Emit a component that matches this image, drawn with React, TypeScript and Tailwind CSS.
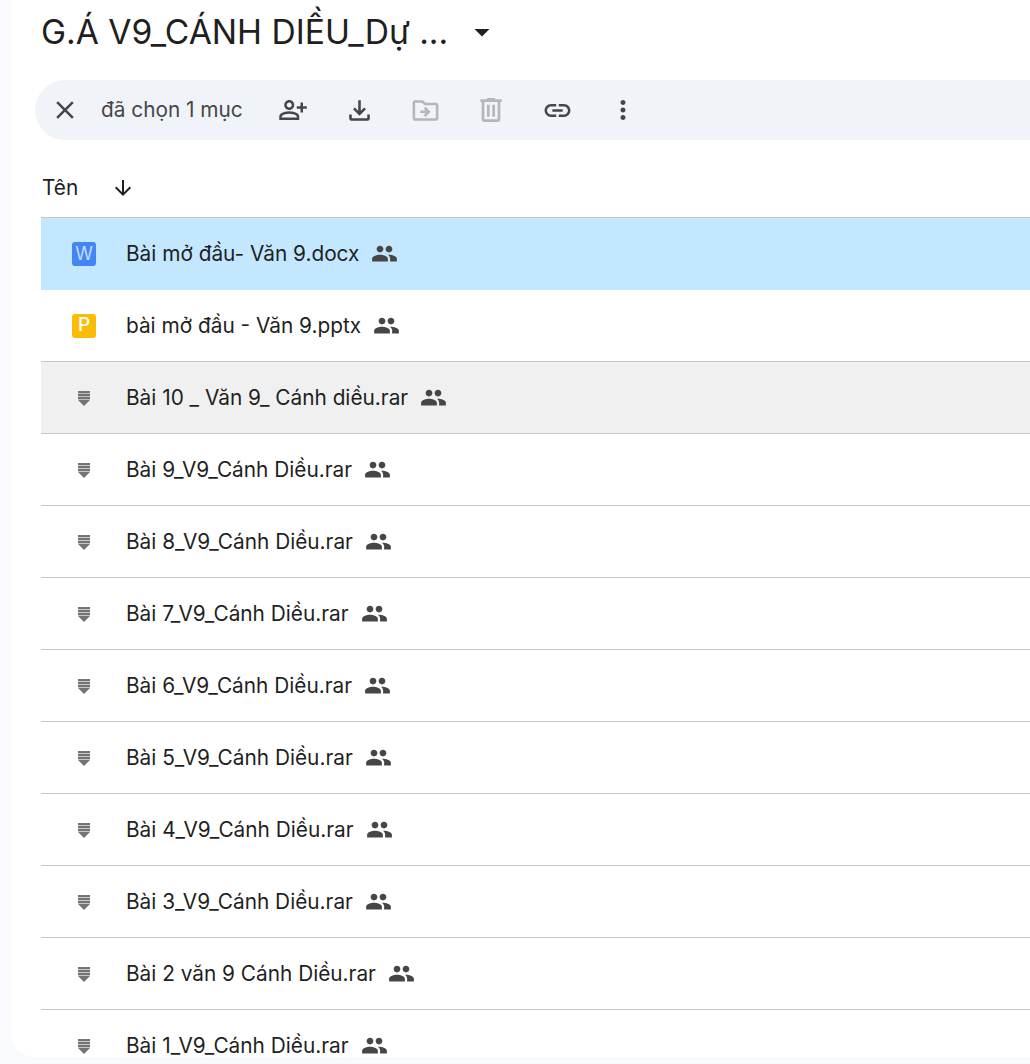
import {
  MdArrowDownward,
  MdArrowDropDown,
  MdClose,
  MdLink,
  MdMoreVert,
  MdOutlineDriveFileMove,
  MdOutlineFileDownload,
  MdOutlinePersonAddAlt,
  MdPeople,
} from 'react-icons/md';

type FileKind = 'word' | 'ppt' | 'rar';

const files: { name: string; kind: FileKind; state?: 'selected' | 'hover' }[] = [
  { name: 'Bài mở đầu- Văn 9.docx', kind: 'word', state: 'selected' },
  { name: 'bài mở đầu - Văn 9.pptx', kind: 'ppt' },
  { name: 'Bài 10 _ Văn 9_ Cánh diều.rar', kind: 'rar', state: 'hover' },
  { name: 'Bài 9_V9_Cánh Diều.rar', kind: 'rar' },
  { name: 'Bài 8_V9_Cánh Diều.rar', kind: 'rar' },
  { name: 'Bài 7_V9_Cánh Diều.rar', kind: 'rar' },
  { name: 'Bài 6_V9_Cánh Diều.rar', kind: 'rar' },
  { name: 'Bài 5_V9_Cánh Diều.rar', kind: 'rar' },
  { name: 'Bài 4_V9_Cánh Diều.rar', kind: 'rar' },
  { name: 'Bài 3_V9_Cánh Diều.rar', kind: 'rar' },
  { name: 'Bài 2 văn 9 Cánh Diều.rar', kind: 'rar' },
  { name: 'Bài 1_V9_Cánh Diều.rar', kind: 'rar' },
];

const FileIcon = ({ kind }: { kind: FileKind }) => {
  if (kind === 'word') {
    return (
      <span className="flex h-6 w-6 items-center justify-center rounded-[3px] bg-[#4285f4] text-[18px] text-[#c2dcff]">
        W
      </span>
    );
  }
  if (kind === 'ppt') {
    return (
      <span className="flex h-6 w-6 items-center justify-center rounded-[3px] bg-[#fbbc04] text-[19px] font-medium text-white">
        P
      </span>
    );
  }
  return (
    <svg width="24" height="24" viewBox="0 0 24 24" fill="#757575">
      <rect x="6" y="5" width="12" height="2.4" />
      <rect x="6" y="8" width="12" height="2.4" />
      <rect x="6" y="11" width="12" height="2.4" />
      <path d="M6 14h12l-6 6z" />
    </svg>
  );
};

const TrashIcon = () => (
  <svg width="32" height="32" viewBox="0 0 24 24" fill="#b4b6b8">
    <path d="M15 4V3H9v1H4v2h1v13c0 1.1.9 2 2 2h10c1.1 0 2-.9 2-2V6h1V4h-5zm2 15H7V6h10v13zM9 8h2v9H9zm4 0h2v9h-2z" />
  </svg>
);

const App = () => {
  return (
    <div className="h-[1064px] overflow-hidden bg-[#f8fafd] font-['Inter',sans-serif]">
      <div className="ml-[11px] h-[1057px] overflow-hidden rounded-bl-[24px] bg-white pl-[24px]">
        <div className="mb-[16px] flex h-[64px] items-center pl-[6px]">
          <h1 className="text-[33.6px] leading-none font-normal whitespace-nowrap text-[#1f1f1f]">
            G.Á V9_CÁNH DIỀU_Dự ...
          </h1>
          <MdArrowDropDown className="ml-[16px] text-[#1f1f1f]" size={36} />
        </div>

        <div className="flex h-[60px] items-center rounded-l-[30px] bg-[#f0f4f9] pl-[15px] text-[#444746]">
          <MdClose size={30} />
          <span className="ml-[21px] w-[159px] text-[20.8px] whitespace-nowrap">đã chọn 1 mục</span>
          <div className="flex items-center">
            <span className="flex w-[66px] justify-center">
              <MdOutlinePersonAddAlt size={30} />
            </span>
            <span className="flex w-[66px] justify-center">
              <MdOutlineFileDownload size={31} />
            </span>
            <span className="flex w-[66px] justify-center">
              <MdOutlineDriveFileMove size={31} className="text-[#b4b6b8]" />
            </span>
            <span className="flex w-[66px] justify-center">
              <TrashIcon />
            </span>
            <span className="flex w-[66px] justify-center">
              <MdLink size={31} />
            </span>
            <span className="flex w-[66px] justify-center">
              <MdMoreVert size={30} />
            </span>
          </div>
        </div>

        <div className="flex h-[77px] items-center pt-[18px] pl-[7px] text-[#1f1f1f]">
          <span className="text-[20.8px]">Tên</span>
          <MdArrowDownward size={24} className="ml-[33px]" />
        </div>

        <div className="ml-[6px] border-t border-[#c7c7c7]">
          {files.map((file) => (
            <div
              key={file.name}
              className={`flex h-[72px] shrink-0 items-center border-b pl-[31px] ${
                file.state === 'selected'
                  ? 'border-transparent bg-[#c2e7ff]'
                  : file.state === 'hover'
                    ? 'border-[#c7c7c7] bg-[#f0f0f0]'
                    : 'border-[#c7c7c7]'
              }`}
            >
              <FileIcon kind={file.kind} />
              <span className="ml-[30px] text-[20.8px] whitespace-nowrap text-[#1f1f1f]">{file.name}</span>
              <MdPeople size={27} className="ml-[12px] text-[#444746]" />
            </div>
          ))}
        </div>
      </div>
    </div>
  );
};

export default App;
